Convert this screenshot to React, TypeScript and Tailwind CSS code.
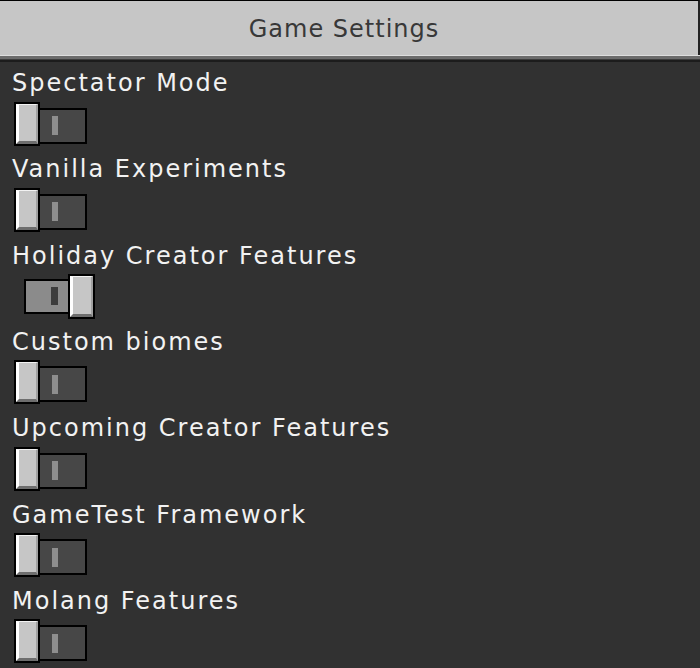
const settings = [
  { label: "Spectator Mode", on: false },
  { label: "Vanilla Experiments", on: false },
  { label: "Holiday Creator Features", on: true },
  { label: "Custom biomes", on: false },
  { label: "Upcoming Creator Features", on: false },
  { label: "GameTest Framework", on: false },
  { label: "Molang Features", on: false },
];

const font = { fontFamily: '"DejaVu Sans", "Liberation Sans", sans-serif' };

function Knob({ tall }: { tall?: boolean }) {
  return (
    <div
      className={`shrink-0 border-2 border-black ${tall ? "w-[27px] h-[45px]" : "w-[26px] h-[44px]"}`}
    >
      <div className="w-full h-full bg-[#c6c6c6] border-l-[3px] border-l-white border-t border-t-[#f2f2f2] border-r-2 border-r-[#a0a0a0] border-b-[3px] border-b-[#6e6e6e]" />
    </div>
  );
}

function Toggle({ on }: { on: boolean }) {
  if (on) {
    return (
      <div className="flex items-start pl-[24px]">
        <div className="mt-[5px] w-[46px] h-[35px] border-2 border-r-0 border-black bg-[#8b8b8b] flex items-center pl-[25px]">
          <div className="w-[7px] h-[18px] bg-[#3c3c3c]" />
        </div>
        <div className="-ml-[2px]">
          <Knob tall />
        </div>
      </div>
    );
  }
  return (
    <div className="flex items-start pl-[14px]">
      <Knob />
      <div className="mt-[6px] w-[47px] h-[36px] border-2 border-l-0 border-black bg-[#474747] flex items-center pl-[12px]">
        <div className="w-[6px] h-[19px] bg-[#8e8e8e]" />
      </div>
    </div>
  );
}

export default function App() {
  return (
    <div className="w-[700px] h-[668px] bg-[#313131] overflow-hidden" style={font}>
      {/* Title bar */}
      <div className="h-[55px] bg-[#c6c6c6] border-t border-black border-r-2 border-r-[#222] flex items-center justify-center">
        <span className="text-[24px] leading-[28px] tracking-[1px] text-[#383838] mt-[2px] ml-[-10px]">
          Game Settings
        </span>
      </div>
      <div className="h-px bg-[#dedede]" />
      <div className="h-[3px] bg-[#6c6c6c]" />
      <div className="h-px bg-[#3c3c3c]" />
      <div className="h-[2px] bg-[#1c1c1c]" />

      {/* Toggles */}
      <div className="pt-[7px] flex flex-col">
        {settings.map((s) => (
          <div key={s.label} className="h-[86.33px] shrink-0">
            <div className="pl-[12px] text-[24px] leading-[28px] tracking-[2px] text-[#f2f2f2] whitespace-nowrap">
              {s.label}
            </div>
            <div className={s.on ? "mt-[4px]" : "mt-[4.5px]"}>
              <Toggle on={s.on} />
            </div>
          </div>
        ))}
      </div>
    </div>
  );
}
